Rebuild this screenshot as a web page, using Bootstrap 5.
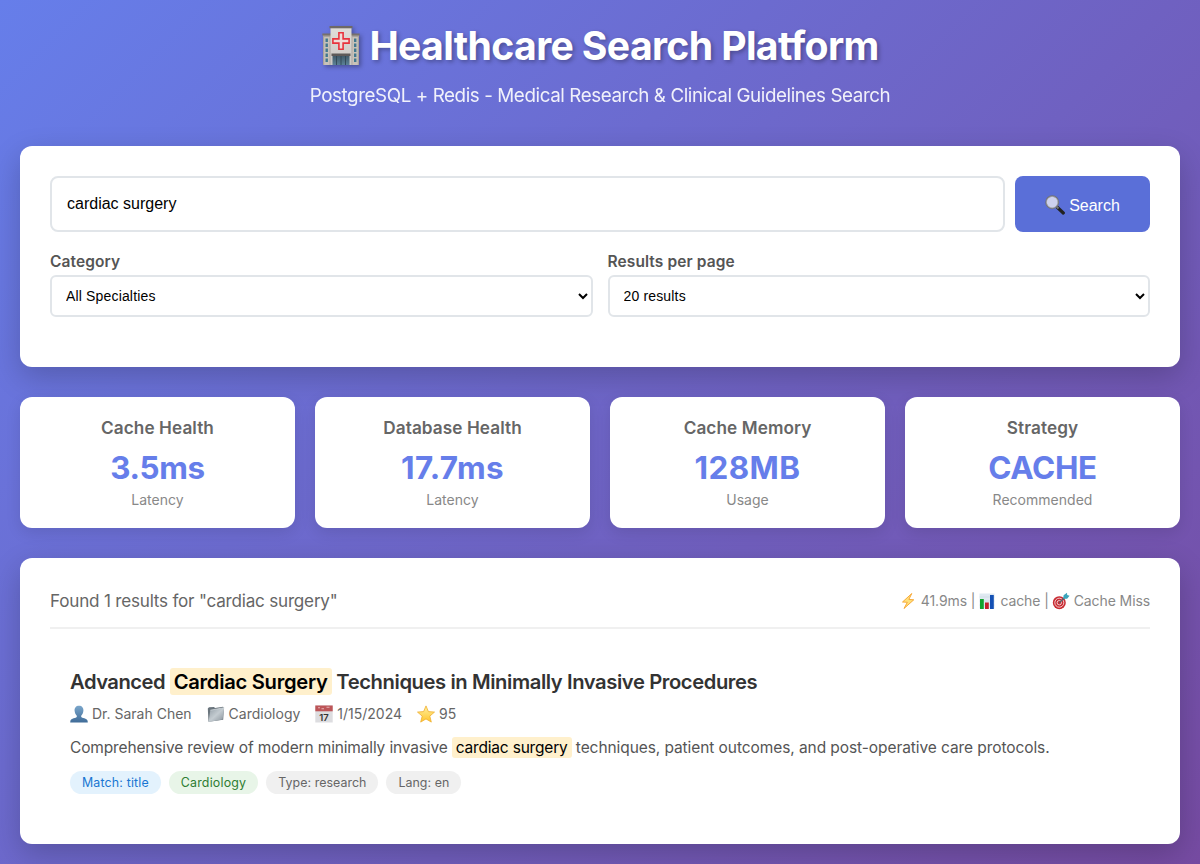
<!DOCTYPE html>
<html lang="en">
<head>
<meta charset="utf-8">
<meta name="viewport" content="width=device-width, initial-scale=1">
<title>Healthcare Search Platform</title>
<link href="https://cdn.jsdelivr.net/npm/bootstrap@5.3.0/dist/css/bootstrap.min.css" rel="stylesheet">
<style>
  body { font-family: Inter, "Liberation Sans", sans-serif; color: #333; min-height: 100vh;
    background: linear-gradient(135deg, #667eea 0%, #764ba2 100%); }
  .page { padding: 20px; }
  .page-title { font-size: 39.2px; line-height: 52px; letter-spacing: -.65px; font-weight: 700; text-shadow: 2px 2px 4px rgba(0,0,0,.3); gap: 8px; }
  .page-title svg { width: 40px; height: 42px; filter: drop-shadow(2px 2px 2px rgba(0,0,0,.3)); }
  .page-sub { font-size: 18.8px; line-height: 26px; letter-spacing: -.41px; opacity: .9; margin: 11px 0 37px; }
  .panel { background: #fff; border-radius: 12px; box-shadow: 0 10px 30px rgba(0,0,0,.2); padding: 30px; }
  .search-panel { height: 221px; }
  .results-panel { height: 286px; }
  .search-row { gap: 10px; height: 56px; }
  .search-box { font: 16px "Liberation Sans", sans-serif; color: #000; border: 2px solid #e1e5e9; border-radius: 8px; padding: 0 15px; }
  .search-btn, .search-btn:hover { width: 135px; background: #5a6fd8; color: #fff; border: 0; border-radius: 8px; font: 16px "Liberation Sans", sans-serif; padding: 2px 0 0; gap: 4px; }
  .search-btn span { padding-top: 1px; }
  .filter-row { gap: 15px; margin-top: 18px; }
  .filter-label { display: block; font-size: 15.5px; line-height: 24px; letter-spacing: .1px; font-weight: 600; color: #555; }
  .filter-pick { font: 14px "Liberation Sans", sans-serif; letter-spacing: .16px; color: #000; background: #fff; border: 2px solid #e1e5e9; border-radius: 6px; height: 42px; padding: 0 10px; margin-top: 1px; }
  .even { flex: 1 1 0; }
  .stat-row { gap: 20px; margin: 30px 0; }
  .stat { height: 131px; padding: 18px 20px; border-radius: 12px; background: #fff; box-shadow: 0 5px 15px rgba(0,0,0,.1); }
  .stat-name { font-size: 17.2px; line-height: 26px; letter-spacing: .08px; font-weight: 600; color: #666; }
  .stat-value { font-size: 31.4px; line-height: 40px; letter-spacing: -.35px; font-weight: 700; color: #667eea; margin-top: 7px; }
  .stat-value.wide { letter-spacing: .4px; }
  .stat-note { font-size: 14px; line-height: 20px; letter-spacing: .02px; color: #888; margin-top: 2px; }
  .results-head { border-bottom: 2px solid #f0f0f0; height: 41px; line-height: 26px; }
  .found { font-size: 17.1px; letter-spacing: -.21px; color: #666; }
  .timing { font-size: 14px; letter-spacing: -.1px; color: #888; gap: 4px; height: 26px; }
  .timing .ico { margin-left: -1px; }
  .ico { width: 18px; height: 18px; flex: none; }
  .hit { padding: 39px 20px 0; }
  .hit-title { font-size: 20.2px; line-height: 28px; letter-spacing: -.4px; font-weight: 600; }
  .hit-title .lead-in { letter-spacing: -.5px; }
  .hit-meta { font-size: 14px; line-height: 22px; letter-spacing: 0; color: #666; margin-top: 7px; gap: 15px; }
  .hit-meta span { gap: 4px; }
  .hit-text { font-size: 15.5px; line-height: 24px; letter-spacing: -.08px; color: #555; margin-top: 11px; }
  .hit-text .lead-in { letter-spacing: -.15px; }
  .hl { background: #fff0cc; color: #000; border-radius: 3px; padding: 1px 4px; }
  .hit-title .hl { letter-spacing: -.28px; }
  .hit-text .hl { letter-spacing: -.2px; }
  .pills { margin-top: 11px; }
  .pill { font-size: 12.4px; line-height: 23px; border-radius: 12px; padding: 0 12px; letter-spacing: .05px; background: #f0f0f0; color: #666; }
  .pill.match { background: #e3f2fd; color: #1976d2; letter-spacing: .16px; }
  .pill.topic { background: #e8f5e8; color: #2e7d32; letter-spacing: .2px; }
</style>
</head>
<body>
<main class="page">
  <header class="text-center text-white">
    <h1 class="page-title mb-0 d-flex justify-content-center align-items-center">
      <svg viewBox="0 0 40 42">
        <defs>
          <linearGradient id="wall" x1="0" y1="0" x2="0" y2="1"><stop offset="0" stop-color="#e0deda"/><stop offset="1" stop-color="#cbc8c4"/></linearGradient>
          <linearGradient id="door" x1="0" y1="0" x2="0" y2="1"><stop offset="0" stop-color="#3c5260"/><stop offset="1" stop-color="#5b8297"/></linearGradient>
        </defs>
        <path d="M2 10h8v30H2zM30 10h8v30h-8z" fill="#a9a39c"/>
        <path d="M1.300 8.500H10v2H1.300zM30 8.500h8.700v2H30z" fill="#77706c"/>
        <path d="M3.200 12h5.400v28H3.200zM31.400 12h5.400v28h-5.400z" fill="#c8c2b9"/>
        <g fill="#41788f"><path d="M4.500 13.500h2.400v3.500H4.500zM4.500 18.500h2.400V22H4.500zM4.500 23.500h2.400V27H4.500zM4.500 28.500h2.400V32H4.500zM4.500 33.500h2.400V37H4.500zM33 13.500h2.400v3.500H33zM33 18.500h2.400V22H33zM33 23.500h2.400V27H33zM33 28.500h2.400V32H33zM33 33.500h2.400V37H33z"/></g>
        <path d="M9.500 2h21v38h-21z" fill="url(#wall)"/>
        <path d="M8.500 1h23v2.300h-23z" fill="#6e6966"/>
        <path d="M11.500 29h17v11h-17z" fill="url(#door)"/>
        <path d="M10.500 28.500h19V31h-19z" fill="#5d5a59"/>
        <path d="M15.500 31v9M20 31v9M24.500 31v9" stroke="#2d414e" stroke-width=".8"/>
        <path d="M17.900 7.700h4.200v6.200h6v4.200h-6v6.200h-4.200v-6.200h-6v-4.200h6z" fill="#efdcd9" stroke="#e8333d" stroke-width="1.600"/>
      </svg>
      <span>Healthcare Search Platform</span>
    </h1>
    <p class="page-sub">PostgreSQL + Redis - Medical Research &amp; Clinical Guidelines Search</p>
  </header>

  <section class="panel search-panel">
    <div class="search-row d-flex">
      <input class="search-box flex-grow-1" type="text" value="cardiac surgery" aria-label="Search">
      <button class="btn search-btn d-flex align-items-center justify-content-center" type="button">
        <svg width="20" height="20" viewBox="0 0 20 20">
          <path d="M12.500 12.500 18.300 18" stroke="#222" stroke-width="3.200" stroke-linecap="round"/>
          <path d="m11.500 11.500 2 2" stroke="#777" stroke-width="1.800"/>
          <circle cx="7.200" cy="7.200" r="6.200" fill="#cdd1ee" stroke="#707177" stroke-width="1.500"/>
          <circle cx="7.200" cy="7.200" r="5.700" fill="none" stroke="#c3c4c8" stroke-width=".5"/>
        </svg>
        <span>Search</span>
      </button>
    </div>
    <div class="filter-row d-flex">
      <div class="even"><label class="filter-label" for="category">Category</label><select id="category" class="filter-pick w-100"><option>All Specialties</option></select></div>
      <div class="even"><label class="filter-label" for="limit">Results per page</label><select id="limit" class="filter-pick w-100"><option>20 results</option></select></div>
    </div>
  </section>

  <section class="stat-row d-flex text-center">
    <div class="stat even"><div class="stat-name">Cache Health</div><div class="stat-value">3.5ms</div><div class="stat-note">Latency</div></div>
    <div class="stat even"><div class="stat-name">Database Health</div><div class="stat-value wide">17.7ms</div><div class="stat-note">Latency</div></div>
    <div class="stat even"><div class="stat-name">Cache Memory</div><div class="stat-value wide">128MB</div><div class="stat-note">Usage</div></div>
    <div class="stat even"><div class="stat-name">Strategy</div><div class="stat-value">CACHE</div><div class="stat-note">Recommended</div></div>
  </section>

  <section class="panel results-panel">
    <div class="results-head d-flex justify-content-between">
      <span class="found">Found 1 results for "cardiac surgery"</span>
      <div class="timing d-flex align-items-center">
        <svg class="ico" viewBox="0 0 18 18"><path d="M12.800 1.500 3.500 10l4.800.3L5 16.500 14.800 7.800l-4.900-.4z" fill="#ffe07a" stroke="#f5a12c" stroke-width=".9" stroke-linejoin="round"/></svg>
        <span>41.9ms |</span>
        <svg class="ico" viewBox="0 0 18 18"><path d="M1.500 1.500h15v15h-15z" fill="#dfe9f1"/><path d="M1.500 5h15M1.500 9h15M1.500 13h15" stroke="#c5d3df" stroke-width=".5"/><path d="M2 7h3.800v10H2z" fill="#12a32d"/><path d="M7 10.500h3.800V17H7z" fill="#c4202b"/><path d="M12 3h3.800v14H12z" fill="#1450b4"/></svg>
        <span>cache |</span>
        <svg class="ico" viewBox="0 0 18 18"><circle cx="7.300" cy="10.700" r="6.500" fill="#c92a32"/><circle cx="7.300" cy="10.700" r="4.500" fill="none" stroke="#f4dcdc" stroke-width=".9"/><circle cx="7.300" cy="10.700" r="2.200" fill="none" stroke="#f4dcdc" stroke-width=".9"/><path d="m7.300 10.700 6-5.700" stroke="#53616a" stroke-width="1.200"/><path d="m11.200 6.800.4-3.500L15 .8l.2 2.200 2.400.8-2.500 3z" fill="#3ba5bb"/></svg>
        <span>Cache Miss</span>
      </div>
    </div>
    <div class="hit">
      <h2 class="hit-title mb-0"><span class="lead-in">Advanced </span><span class="hl">Cardiac Surgery</span> Techniques in Minimally Invasive Procedures</h2>
      <div class="hit-meta d-flex">
        <span class="d-flex align-items-center">
          <svg class="ico" viewBox="0 0 18 18"><defs><linearGradient id="bust" x1="0" y1="0" x2="0" y2="1"><stop offset="0" stop-color="#7ba6cb"/><stop offset="1" stop-color="#3f6c98"/></linearGradient></defs><path d="M9 .7c3 0 4.600 2.100 4.400 5-.2 2.300-1.100 4-2.200 5v1.200c.5 1 5.900 1.100 6.400 3.800l.2 1.800H.2l.2-1.800c.5-2.700 5.900-2.800 6.400-3.800v-1.200c-1.100-1-2-2.700-2.200-5C4.400 2.800 6 .7 9 .7z" fill="url(#bust)"/></svg>
          Dr. Sarah Chen</span>
        <span class="d-flex align-items-center">
          <svg class="ico" viewBox="0 0 18 18"><defs><linearGradient id="cover" x1="0" y1="0" x2="1" y2="1"><stop offset="0" stop-color="#929da5"/><stop offset=".5" stop-color="#c4ccd1"/><stop offset="1" stop-color="#858f97"/></linearGradient></defs><path d="M.8 3.500 2 2.300l5-.4 1 1.200 8-1.300.9.9-.7 12L1.500 16.700z" fill="#69747c"/><path d="m3.300 5.200 13.900-2.500-1.600 11.800L1.500 17z" fill="url(#cover)"/><path d="m3.300 5.200 13.900-2.500" stroke="#dde3e7" stroke-width=".7"/></svg>
          Cardiology</span>
        <span class="d-flex align-items-center">
          <svg class="ico" viewBox="0 0 18 18"><path d="M.3.500h17.400v17H.3z" fill="#dddde0"/><path d="M.3.500h17.400v5.800H.3z" fill="#bd5558"/><path d="M3 2.300h2v1H3zm3.500 1H9v1H6.500zm5-1.500h3v1h-3z" fill="#e6b4b5"/><text x="9" y="15.600" text-anchor="middle" font-family="Inter, sans-serif" font-size="9.500" font-weight="600" letter-spacing="0" fill="#333">17</text></svg>
          1/15/2024</span>
        <span class="d-flex align-items-center">
          <svg class="ico" viewBox="0 0 18 18"><defs><linearGradient id="gold" x1="0" y1="0" x2="0" y2="1"><stop offset="0" stop-color="#fff0a0"/><stop offset="1" stop-color="#ffc52c"/></linearGradient></defs><path d="m9 .9 2.400 5.700 6.100.5-4.700 4 1.500 6L9 13.900l-5.300 3.200 1.500-6-4.700-4 6.100-.5z" fill="url(#gold)" stroke="#efae2e" stroke-width=".8" stroke-linejoin="round"/></svg>
          95</span>
      </div>
      <p class="hit-text mb-0"><span class="lead-in">Comprehensive review of modern minimally invasive </span><span class="hl">cardiac surgery</span> techniques, patient outcomes, and post-operative care protocols.</p>
      <div class="pills d-flex gap-2"><span class="pill match">Match: title</span><span class="pill topic">Cardiology</span><span class="pill">Type: research</span><span class="pill">Lang: en</span></div>
    </div>
  </section>
</main>
</body>
</html>
